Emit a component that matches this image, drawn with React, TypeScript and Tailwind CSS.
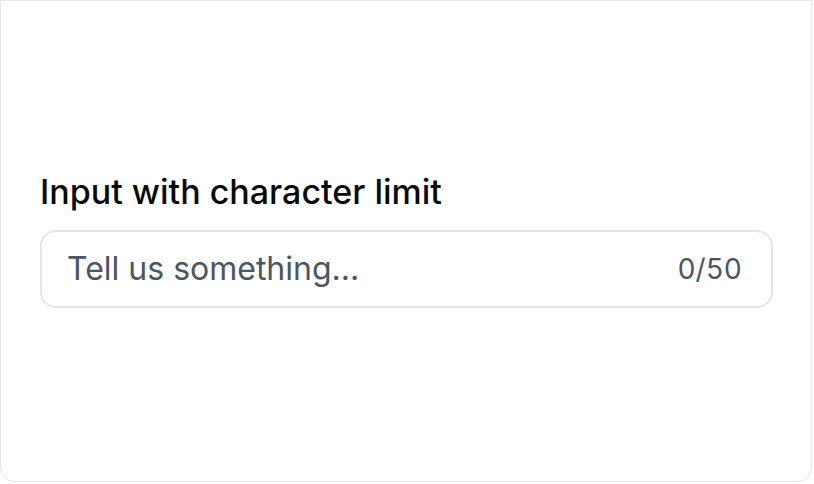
import { useState } from "react";

export default function App() {
  const [value, setValue] = useState("");
  const maxLength = 50;

  return (
    <div className="w-[814px] h-[484px] bg-white" style={{ fontFamily: "Inter, sans-serif" }}>
      <div className="w-[812px] h-[482px] border border-[#e7e7e7] rounded-b-[14px] bg-white flex flex-col justify-center pl-[39px] pr-[38px] pb-[2px]">
        <label htmlFor="limit" className="text-[34px] leading-[40px] font-medium text-[#0a0a0a]">
          Input with character limit
        </label>
        <div className="mt-[18px] h-[78px] flex items-center border-2 border-[#e5e5e5] rounded-[16px] bg-white pl-[25px] pr-[29px]">
          <input
            id="limit"
            type="text"
            value={value}
            maxLength={maxLength}
            onChange={(e) => setValue(e.target.value)}
            placeholder="Tell us something..."
            className="flex-1 min-w-0 bg-transparent outline-none text-[32px] text-[#111827] placeholder:text-[#4b5563]"
          />
          <span className="text-[28px] text-[#4b5563] tabular-nums">
            {value.length}/{maxLength}
          </span>
        </div>
      </div>
    </div>
  );
}
